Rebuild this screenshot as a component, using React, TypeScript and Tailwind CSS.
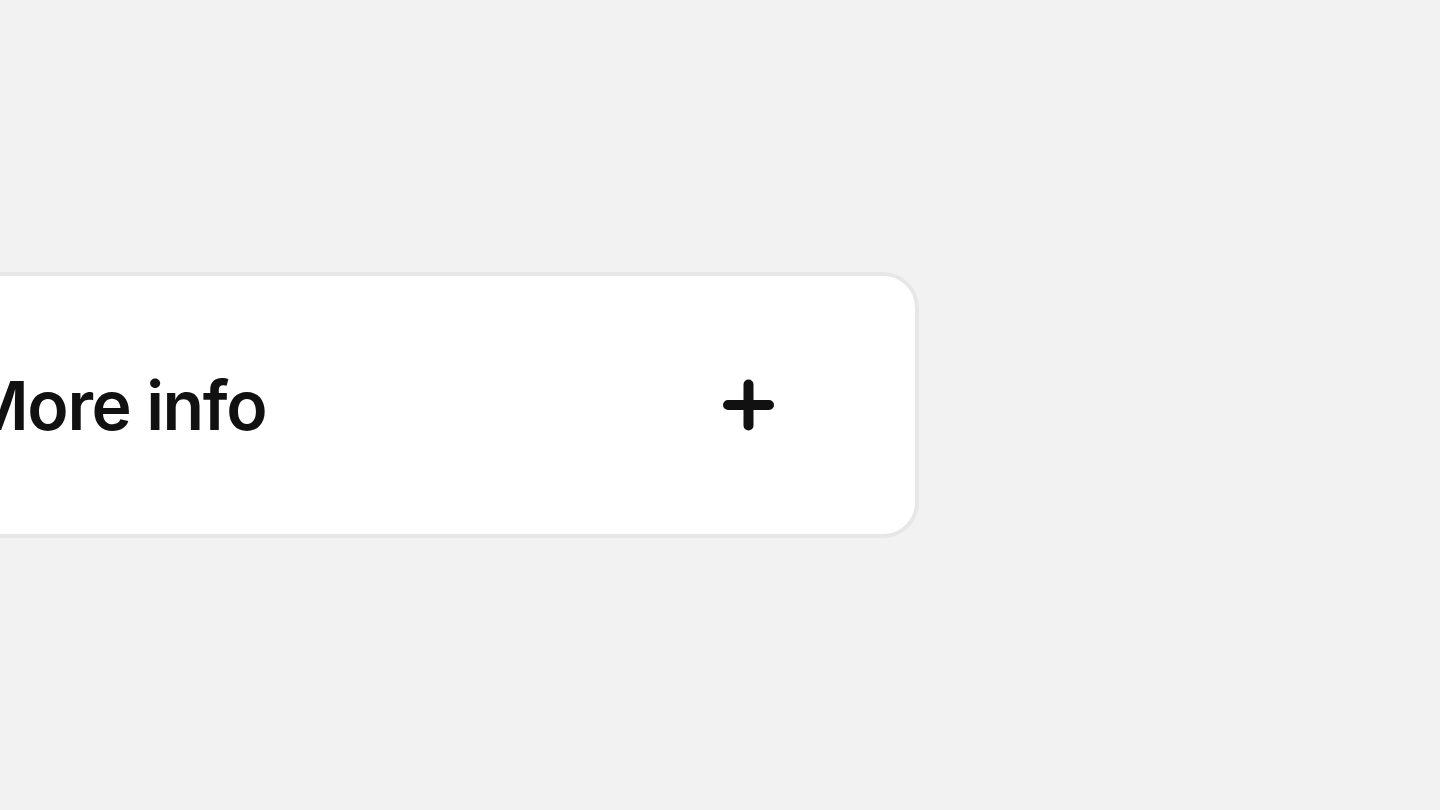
export default function App() {
  return (
    <div className="flex h-screen w-full items-center overflow-hidden bg-[#f2f2f2]">
      <div className="ml-[-200px] flex h-[266px] w-[1119px] shrink-0 items-center justify-between rounded-[36px] border-4 border-[#e7e7e7] bg-white pl-[162px] pr-[135px]">
        <span className="font-['Inter',sans-serif] text-[68px] font-semibold leading-none tracking-[-0.02em] text-[#111111]">
          More info
        </span>
        <svg width="64" height="64" viewBox="0 0 64 64" fill="none" className="shrink-0">
          <path d="M12 32h41M32.5 11.5v41" stroke="#111111" strokeWidth="10" strokeLinecap="round" />
        </svg>
      </div>
    </div>
  );
}
